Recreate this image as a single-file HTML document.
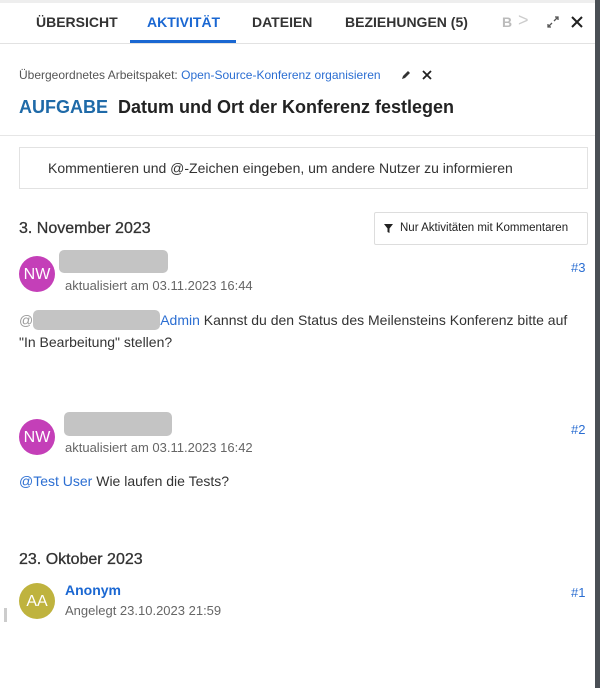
<!DOCTYPE html>
<html><head><meta charset="utf-8"><style>
*{margin:0;padding:0;box-sizing:border-box}
body{width:600px;height:688px;overflow:hidden;background:#fff;font-family:"Liberation Sans",sans-serif;color:#222;position:relative}
.a{position:absolute;white-space:nowrap}
.tab{font-size:14px;font-weight:bold;top:14px;color:#333}
.av{position:absolute;width:36px;height:36px;border-radius:50%;color:#fff;font-size:16px;text-align:center;line-height:38px}
.blur{position:absolute;background:#c4c4c4;border-radius:5px}
.gray{color:#666;font-size:13px}
.blue{color:#2b6ed2}
</style></head><body>
<div class="a" style="left:0;top:0;width:600px;height:3px;background:#eee"></div>
<div class="a" style="left:595px;top:0;width:5px;height:688px;background:#4a4f55"></div>
<div class="a tab" style="left:36px">ÜBERSICHT</div>
<div class="a tab" style="left:147px;color:#1a67d2">AKTIVITÄT</div>
<div class="a tab" style="left:252px">DATEIEN</div>
<div class="a tab" style="left:345px">BEZIEHUNGEN (5)</div>
<div class="a tab" style="left:502px;color:#bbb">B</div>
<div class="a" style="left:518px;top:10px;font-size:18px;color:#ccc">&gt;</div>
<svg class="a" style="left:546px;top:15px" width="14" height="14" viewBox="0 0 14 14" fill="none" stroke="#555" stroke-width="1.3"><path d="M8 6L12 2M9 2h3v3M6 8L2 12M2 9v3h3"/></svg>
<svg class="a" style="left:571px;top:16px" width="12" height="12" viewBox="0 0 12 12" stroke="#222" stroke-width="2"><path d="M1 1L11 11M11 1L1 11"/></svg>
<div class="a" style="left:130px;top:40px;width:106px;height:3px;background:#1a67d2"></div>
<div class="a" style="left:0;top:43px;width:595px;height:1px;background:#e2e2e2"></div>
<div class="a" style="left:19px;top:68px;font-size:12px;color:#555">Übergeordnetes Arbeitspaket: <span class="blue">Open-Source-Konferenz organisieren</span></div>
<svg class="a" style="left:401px;top:69px" width="11" height="11" viewBox="0 0 11 11"><path d="M1 10l1-3 5-5 2 2-5 5z" fill="#333"/></svg>
<svg class="a" style="left:422px;top:70px" width="10" height="10" viewBox="0 0 10 10" stroke="#222" stroke-width="1.8"><path d="M1 1L9 9M9 1L1 9"/></svg>
<div class="a" style="left:19px;top:97px;font-size:18px;font-weight:bold"><span style="color:#1f6aa8">AUFGABE</span>&nbsp; Datum und Ort der Konferenz festlegen</div>
<div class="a" style="left:0;top:135px;width:595px;height:1px;background:#e6e6e6"></div>
<div class="a" style="left:19px;top:147px;width:569px;height:42px;border:1px solid #e2e2e2;font-size:14px;line-height:40px;padding-left:28px;color:#333">Kommentieren und @-Zeichen eingeben, um andere Nutzer zu informieren</div>
<div class="a" style="left:19px;top:220px;font-size:16px;color:#333;-webkit-text-stroke:.3px #333">3. November 2023</div>
<div class="a" style="left:374px;top:212px;width:214px;height:33px;border:1px solid #ddd;border-radius:2px;font-size:11.5px;line-height:31px;padding-left:25px;color:#222">Nur Aktivitäten mit Kommentaren</div>
<svg class="a" style="left:384px;top:224px" width="9" height="9" viewBox="0 0 9 9"><path d="M0 0h9L5.5 4.5V9L3.5 8V4.5z" fill="#222"/></svg>
<div class="av" style="left:19px;top:256px;background:#c43fb8">NW</div>
<div class="blur" style="left:59px;top:250px;width:109px;height:23px"></div>
<div class="a gray" style="left:65px;top:278px">aktualisiert am 03.11.2023 16:44</div>
<div class="a blue" style="left:571px;top:260px;font-size:13px">#3</div>
<div class="a" style="left:19px;top:309px;font-size:14px;color:#333;line-height:22px">
<span style="color:#999">@</span><span style="display:inline-block;width:127px;height:20px;background:#c4c4c4;border-radius:5px;vertical-align:-5px"></span><span class="blue">Admin</span> Kannst du den Status des Meilensteins Konferenz bitte auf<br>"In Bearbeitung" stellen?</div>
<div class="av" style="left:19px;top:419px;background:#c43fb8">NW</div>
<div class="blur" style="left:64px;top:412px;width:108px;height:24px"></div>
<div class="a gray" style="left:65px;top:440px">aktualisiert am 03.11.2023 16:42</div>
<div class="a blue" style="left:571px;top:422px;font-size:13px">#2</div>
<div class="a" style="left:19px;top:473px;font-size:14px;color:#333"><span class="blue">@Test User</span> Wie laufen die Tests?</div>
<div class="a" style="left:19px;top:551px;font-size:16px;color:#333;-webkit-text-stroke:.3px #333">23. Oktober 2023</div>
<div class="av" style="left:19px;top:583px;background:#bfb33e">AA</div>
<div class="a" style="left:65px;top:582px;font-size:14px;font-weight:bold;color:#1a67d2">Anonym</div>
<div class="a gray" style="left:65px;top:603px">Angelegt 23.10.2023 21:59</div>
<div class="a blue" style="left:571px;top:585px;font-size:13px">#1</div>
<div class="a" style="left:4px;top:608px;width:3px;height:14px;background:#ccc"></div>
</body></html>
